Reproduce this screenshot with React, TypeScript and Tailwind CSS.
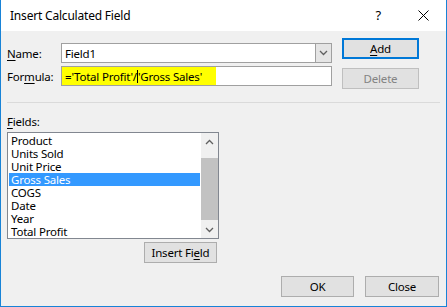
/**
 * Insert Calculated Field dialog (Excel pivot table)
 */

const FIELDS = ['Product', 'Units Sold', 'Unit Price', 'Gross Sales', 'COGS', 'Date', 'Year', 'Total Profit'];
const SELECTED = 'Gross Sales';

function Chevron({ up }: { up?: boolean }) {
  return (
    <svg width="9" height="6" viewBox="0 0 9 6" className="block">
      <polyline
        points={up ? '1,5 4.5,1.5 8,5' : '1,1 4.5,4.5 8,1'}
        fill="none"
        stroke="#606060"
        strokeWidth="1.3"
      />
    </svg>
  );
}

export default function App() {
  return (
    <div className="w-[447px] h-[307px] flex flex-col bg-[#f0f0f0] border-x border-b border-[#1883d7] text-[11.5px] tracking-[-0.2px] leading-[15px] text-black font-['Noto_Sans',sans-serif]">

      {/* ── Title bar ─────────────────────────────────────────── */}
      <div className="h-[31px] shrink-0 bg-white flex items-center justify-between pl-[9px] pr-[17px]">
        <span className="text-[12px]">Insert Calculated Field</span>
        <div className="flex items-center gap-[37px]">
          <span className="text-[13px]">?</span>
          <svg width="11" height="11" viewBox="0 0 11 11" className="block">
            <line x1="0.5" y1="0.5" x2="10.5" y2="10.5" stroke="#000" strokeWidth="1" />
            <line x1="10.5" y1="0.5" x2="0.5" y2="10.5" stroke="#000" strokeWidth="1" />
          </svg>
        </div>
      </div>

      <div className="flex-1 flex flex-col px-[6px]">

        {/* ── Name / Formula + Add / Delete ─────────────────────── */}
        <div className="flex pt-[7px]">
          <div className="w-[325px] flex flex-col gap-[3px] pt-[5px]">
            <div className="flex items-center h-[20px]">
              <span className="w-[54px]"><u className="underline-offset-2">N</u>ame:</span>
              <div className="flex-1 h-full flex bg-white border border-[#a0a0a0]">
                <span className="flex-1 pl-[3px] flex items-center">Field1</span>
                <div className="w-[16px] flex items-center justify-center bg-[#e5e5e5] border-l border-[#a0a0a0]">
                  <Chevron />
                </div>
              </div>
            </div>
            <div className="flex items-center h-[20px]">
              <span className="w-[54px]">For<u className="underline-offset-2">m</u>ula:</span>
              <div className="flex-1 h-full flex bg-white border border-[#a0a0a0]">
                <div className="w-[154px] h-full bg-[#ffff00] flex items-center pl-[3px] whitespace-nowrap">
                  <span>='Total Profit'/</span>
                  <span className="inline-block w-px h-[13px] bg-black" />
                  <span>'Gross Sales'</span>
                </div>
              </div>
            </div>
          </div>

          <div className="ml-[10px] w-[77px] flex flex-col gap-[9px]">
            <button className="h-[21px] border-2 border-[#0078d7] bg-[#e1e1e1] flex items-center justify-center">
              <span><u className="underline-offset-2">A</u>dd</span>
            </button>
            <button className="h-[21px] border border-[#bfbfbf] bg-[#e1e1e1] text-[#838383] flex items-center justify-center">
              Delete
            </button>
          </div>
        </div>

        <div className="mt-[13px] h-px bg-[#dadada]" />

        {/* ── Fields list ───────────────────────────────────────── */}
        <div className="mt-[11px] h-[16px]"><u className="underline-offset-2">F</u>ields:</div>

        <div className="mt-[2px] w-[212px] h-[107px] flex bg-white border border-[#828790]">
          <div className="flex-1 p-[1px]">
            {FIELDS.map((f) => (
              <div
                key={f}
                className={`h-[13px] leading-[13px] pl-[2px] whitespace-nowrap ${f === SELECTED ? 'bg-[#3399ff] text-white' : ''}`}
              >
                {f}
              </div>
            ))}
          </div>
          <div className="w-[17px] flex flex-col bg-[#f0f0f0]">
            <div className="h-[17px] flex items-center justify-center"><Chevron up /></div>
            <div className="mt-[8px] h-[62px] bg-[#c2c2c2]" />
            <div className="flex-1" />
            <div className="h-[17px] flex items-center justify-center"><Chevron /></div>
          </div>
        </div>

        <button className="mt-[3px] ml-[137px] w-[73px] h-[21px] border border-[#adadad] bg-[#e1e1e1] flex items-center justify-center">
          <span>Insert Fi<u className="underline-offset-2">e</u>ld</span>
        </button>

        {/* ── OK / Close ────────────────────────────────────────── */}
        <div className="mt-[13px] flex justify-end gap-[11px] pr-[1px]">
          <button className="w-[73px] h-[21px] border border-[#adadad] bg-[#e1e1e1]">OK</button>
          <button className="w-[74px] h-[21px] border border-[#adadad] bg-[#e1e1e1]">Close</button>
        </div>
      </div>
    </div>
  );
}
